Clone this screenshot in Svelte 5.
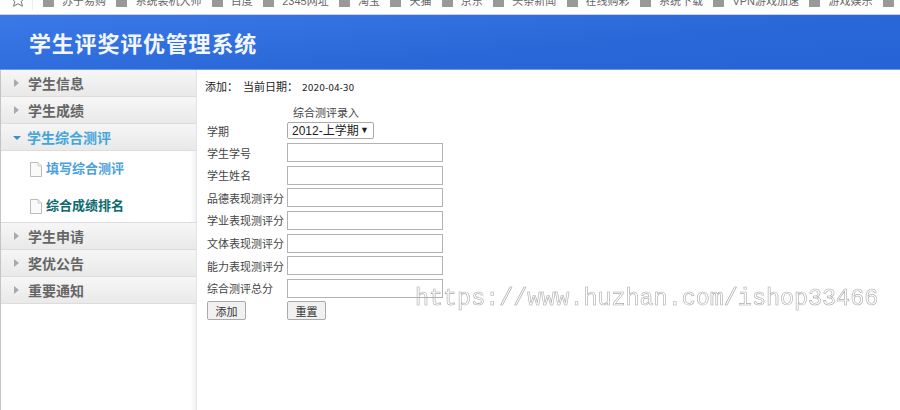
<script>
  const bookmarks = ['苏宁易购', '系统装机大师', '百度', '2345网址', '淘宝', '天猫', '京东', '头条新闻', '在线购彩', '系统下载', 'VPN游戏加速', '游戏娱乐', ''];
  const menus = [
    { name: '学生信息' },
    { name: '学生成绩' },
    { name: '学生综合测评', open: true, items: [
      { name: '填写综合测评', cls: 'blue' },
      { name: '综合成绩排名', cls: 'teal' }
    ] },
    { name: '学生申请' },
    { name: '奖优公告' },
    { name: '重要通知' }
  ];
  const fields = ['学生学号', '学生姓名', '品德表现测评分', '学业表现测评分', '文体表现测评分', '能力表现测评分', '综合测评总分'];
</script>

<div class="page">
  <div class="bookmarks">
    <svg class="star" viewBox="0 0 16 16" width="16" height="16">
      <path d="M8 1l2 4.600 5 .5-3.800 3.300 1.200 4.900L8 11.700l-4.400 2.600 1.200-4.900L1 6.100l5-.5z" fill="none" stroke="#777" stroke-width="1"/>
    </svg>
    <div class="sep"></div>
    {#each bookmarks as b}
      <div class="bookmark"><span class="sq"></span><span class="bm-text">{b}</span></div>
    {/each}
  </div>

  <header><h1>学生评奖评优管理系统</h1></header>

  <div class="body">
    <aside>
      {#each menus as m}
        <div class="menu" class:open={m.open}>
          <span class="arrow"></span>{m.name}
        </div>
        {#if m.items}
          <ul>
            {#each m.items as it}
              <li class={it.cls}>
                <svg viewBox="0 0 12 15" width="12" height="15">
                  <path d="M.5.500h7.500l3.500 3.500v10.500h-11z" fill="#fafafa" stroke="#bbb"/>
                  <path d="M8 .5v3.500h3.500" fill="#eee" stroke="#ccc"/>
                </svg>
                {it.name}
              </li>
            {/each}
          </ul>
        {/if}
      {/each}
    </aside>

    <main>
      <p class="crumb">添加：<span class="today">当前日期：</span><span class="date">2020-04-30</span></p>
      <div class="caption">综合测评录入</div>
      <div class="form">
        <label for="term">学期</label>
        <div class="select-wrap">
          <select id="term"><option>2012-上学期</option></select>
          <span class="caret">▼</span>
        </div>
        {#each fields as f, i}
          <label for={'f' + i}>{f}</label>
          <input id={'f' + i} type="text" />
        {/each}
        <div><button>添加</button></div>
        <div><button>重置</button></div>
      </div>
    </main>
  </div>

  <div class="watermark">https://www.huzhan.com/ishop33466</div>
</div>

<style>
  :global(body) {
    margin: 0;
    background: #fff;
  }

  .page {
    position: relative;
    width: 900px;
    height: 410px;
    overflow: hidden;
    font-family: "Liberation Sans", "Noto Sans CJK SC", sans-serif;
    font-size: 12px;
    color: #333;
  }

  .bookmarks {
    height: 14px;
    display: flex;
    align-items: flex-start;
    overflow: hidden;
    white-space: nowrap;
    font-size: 11px;
    color: #666;
    border-bottom: 1px solid #c9d3e3;
  }

  .star {
    flex: none;
    margin: -8px 0 0 10px;
  }

  .sep {
    flex: none;
    width: 1px;
    height: 10px;
    margin: 0 10px 0 6px;
    background: #eee;
  }

  .bookmark {
    flex: none;
    display: flex;
    margin-right: 10.4px;
  }

  .sq {
    width: 11px;
    height: 7px;
    margin-right: 8px;
    background: #999;
  }

  .bm-text {
    margin-top: -6px;
    line-height: 14px;
  }

  header {
    height: 55px;
    box-sizing: border-box;
    padding-left: 29px;
    display: flex;
    align-items: center;
    background: linear-gradient(175deg, #3a79e6, #2a68d8 60%, #2562d6);
    border-bottom: 1px solid #6d9ae6;
  }

  h1 {
    margin: 0;
    font-size: 22px;
    font-weight: 700;
    letter-spacing: 0.8px;
    color: #f2f6ff;
    font-family: "Noto Sans CJK SC", sans-serif;
  }

  .body {
    display: flex;
    height: 340px;
  }

  aside {
    flex: none;
    width: 197px;
    box-sizing: border-box;
    border-left: 1px solid #c4c4c4;
    border-right: 1px solid #e4e4e4;
    background: linear-gradient(to right, #fff 189px, #f2f2f2);
    overflow: hidden;
  }

  .menu {
    height: 27px;
    box-sizing: border-box;
    display: flex;
    align-items: center;
    padding-left: 13px;
    font-size: 14px;
    font-weight: 700;
    color: #666;
    background: linear-gradient(#f6f6f6, #e9e9e9);
    border-bottom: 1px solid #dcdcdc;
  }

  .menu.open {
    color: #44a5da;
  }

  .arrow {
    width: 0;
    height: 0;
    margin-right: 9px;
    border-left: 5px solid #aaa;
    border-top: 4px solid transparent;
    border-bottom: 4px solid transparent;
  }

  .open .arrow {
    margin: 1px 6px 0 -1px;
    border-top: 4px solid #2f95cf;
    border-left: 4px solid transparent;
    border-right: 4px solid transparent;
    border-bottom: 0;
  }

  ul {
    list-style: none;
    margin: 0;
    height: 72px;
    padding: 9px 0 0 29px;
    box-sizing: border-box;
    border-bottom: 1px solid #dcdcdc;
  }

  li {
    height: 37px;
    display: flex;
    gap: 4px;
    padding-top: 1px;
    box-sizing: border-box;
    font-size: 13px;
    font-weight: 700;
    line-height: 16px;
  }

  li svg {
    margin-top: 1px;
  }

  .blue {
    color: #4d9fdc;
  }

  .teal {
    color: #0d6a6e;
  }

  main {
    flex: 1;
    padding-left: 8px;
  }

  .crumb {
    margin: 0;
    padding-top: 9px;
    line-height: 16px;
    color: #222;
    font-size: 11px;
  }

  .today {
    margin-left: 5px;
  }

  .date {
    margin-left: 4px;
    font-family: "DejaVu Sans", sans-serif;
    font-size: 9px;
  }

  .caption {
    margin: 10px 0 0 88px;
    line-height: 14px;
    font-size: 11px;
    color: #444;
  }

  .form {
    display: grid;
    grid-template-columns: 80px 1fr;
    align-items: center;
    justify-items: start;
    grid-template-rows: 21.4px;
    grid-auto-rows: 22.6px;
    margin: 0 0 0 2px;
    color: #444;
    font-size: 11px;
  }

  .select-wrap {
    position: relative;
    display: flex;
  }

  select {
    appearance: none;
    width: 87px;
    height: 17px;
    padding: 0 0 0 4px;
    font-family: inherit;
    font-size: 12px;
    color: #222;
    background: #fff;
    border: 1px solid #aaa;
    border-radius: 2px;
  }

  .caret {
    position: absolute;
    right: 5px;
    top: 3px;
    font-size: 9px;
    line-height: 11px;
    color: #222;
    pointer-events: none;
  }

  input {
    width: 156px;
    height: 19px;
    box-sizing: border-box;
    padding: 0;
    border: 1px solid #b3b3b3;
    background: #fff;
  }

  button {
    display: block;
    width: 39px;
    height: 19px;
    padding: 0;
    font-family: inherit;
    font-size: 11px;
    color: #333;
    background: #f1f1f1;
    border: 1px solid #aaa;
    border-radius: 2px;
  }

  .watermark {
    position: absolute;
    left: 415px;
    top: 285px;
    font-family: "Liberation Mono", monospace;
    font-size: 23.4px;
    line-height: 28px;
    white-space: nowrap;
    color: transparent;
    will-change: opacity;
    opacity: 0.99;
    -webkit-text-stroke: 0.6px #aaa;
  }
</style>
